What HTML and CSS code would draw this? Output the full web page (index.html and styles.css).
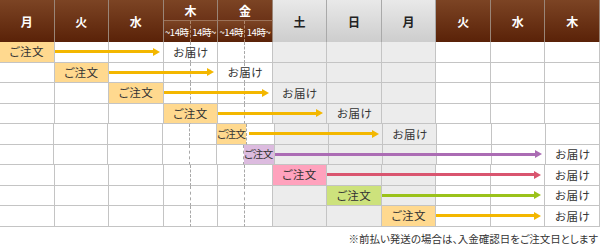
FILE: index.html
```html
<!DOCTYPE html>
<html lang="ja">
<head>
<meta charset="utf-8">
<title>お届けスケジュール</title>
<link rel="stylesheet" href="styles.css">
</head>
<body>
<div class="schedule">
  <div class="head">
    <div class="hd brown tall">月</div>
    <div class="hd brown tall">火</div>
    <div class="hd brown tall">水</div>
    <div class="hd brown top">木</div>
    <div class="hd brown top">金</div>
    <div class="hd gray tall">土</div>
    <div class="hd gray tall">日</div>
    <div class="hd gray tall">月</div>
    <div class="hd brown tall">火</div>
    <div class="hd brown tall">水</div>
    <div class="hd brown tall last">木</div>
    <div class="hd brown sub dash">~14時</div>
    <div class="hd brown sub">14時~</div>
    <div class="hd brown sub dash">~14時</div>
    <div class="hd brown sub">14時~</div>
  </div>

  <div class="row">
    <div class="cell mon"></div><div class="cell tue"></div><div class="cell wed"></div>
    <div class="cell thu-a"></div><div class="cell thu-b"></div><div class="cell fri-a"></div><div class="cell fri-b"></div>
    <div class="cell sat wk"></div><div class="cell sun wk"></div><div class="cell mon2 wk"></div>
    <div class="cell tue2"></div><div class="cell wed2"></div><div class="cell thu2"></div>
    <div class="order yellow-bg from-1 to-3">ご注文</div>
    <div class="arrow yellow from-3 to-7"></div>
    <div class="deliver from-7 to-9">お届け</div>
  </div>

  <div class="row">
    <div class="cell mon"></div><div class="cell tue"></div><div class="cell wed"></div>
    <div class="cell thu-a"></div><div class="cell thu-b"></div><div class="cell fri-a"></div><div class="cell fri-b"></div>
    <div class="cell sat wk"></div><div class="cell sun wk"></div><div class="cell mon2 wk"></div>
    <div class="cell tue2"></div><div class="cell wed2"></div><div class="cell thu2"></div>
    <div class="order yellow-bg from-3 to-5">ご注文</div>
    <div class="arrow yellow from-5 to-9"></div>
    <div class="deliver from-9 to-11">お届け</div>
  </div>

  <div class="row">
    <div class="cell mon"></div><div class="cell tue"></div><div class="cell wed"></div>
    <div class="cell thu-a"></div><div class="cell thu-b"></div><div class="cell fri-a"></div><div class="cell fri-b"></div>
    <div class="cell sat wk"></div><div class="cell sun wk"></div><div class="cell mon2 wk"></div>
    <div class="cell tue2"></div><div class="cell wed2"></div><div class="cell thu2"></div>
    <div class="order yellow-bg from-5 to-7">ご注文</div>
    <div class="arrow yellow from-7 to-11"></div>
    <div class="deliver from-11 to-13">お届け</div>
  </div>

  <div class="row">
    <div class="cell mon"></div><div class="cell tue"></div><div class="cell wed"></div>
    <div class="cell thu-a"></div><div class="cell thu-b"></div><div class="cell fri-a"></div><div class="cell fri-b"></div>
    <div class="cell sat wk"></div><div class="cell sun wk"></div><div class="cell mon2 wk"></div>
    <div class="cell tue2"></div><div class="cell wed2"></div><div class="cell thu2"></div>
    <div class="order yellow-bg from-7 to-9">ご注文</div>
    <div class="arrow yellow from-9 to-13"></div>
    <div class="deliver from-13 to-15">お届け</div>
  </div>

  <div class="row">
    <div class="cell mon"></div><div class="cell tue"></div><div class="cell wed"></div>
    <div class="cell thu-a"></div><div class="cell thu-b"></div><div class="cell fri-a"></div><div class="cell fri-b"></div>
    <div class="cell sat wk"></div><div class="cell sun wk"></div><div class="cell mon2 wk"></div>
    <div class="cell tue2"></div><div class="cell wed2"></div><div class="cell thu2"></div>
    <div class="order yellow-bg narrow from-9 to-10">ご注文</div>
    <div class="arrow yellow gap from-10 to-15"></div>
    <div class="deliver from-15 to-17">お届け</div>
  </div>

  <div class="row">
    <div class="cell mon"></div><div class="cell tue"></div><div class="cell wed"></div>
    <div class="cell thu-a"></div><div class="cell thu-b"></div><div class="cell fri-a"></div><div class="cell fri-b"></div>
    <div class="cell sat wk"></div><div class="cell sun wk"></div><div class="cell mon2 wk"></div>
    <div class="cell tue2"></div><div class="cell wed2"></div><div class="cell thu2"></div>
    <div class="order purple-bg narrow from-10 to-11">ご注文</div>
    <div class="arrow purple from-11 to-21"></div>
    <div class="deliver from-21 to-23">お届け</div>
  </div>

  <div class="row">
    <div class="cell mon"></div><div class="cell tue"></div><div class="cell wed"></div>
    <div class="cell thu-a"></div><div class="cell thu-b"></div><div class="cell fri-a"></div><div class="cell fri-b"></div>
    <div class="cell sat wk"></div><div class="cell sun wk"></div><div class="cell mon2 wk"></div>
    <div class="cell tue2"></div><div class="cell wed2"></div><div class="cell thu2"></div>
    <div class="order pink-bg from-11 to-13">ご注文</div>
    <div class="arrow pink from-13 to-21"></div>
    <div class="deliver from-21 to-23">お届け</div>
  </div>

  <div class="row">
    <div class="cell mon"></div><div class="cell tue"></div><div class="cell wed"></div>
    <div class="cell thu-a"></div><div class="cell thu-b"></div><div class="cell fri-a"></div><div class="cell fri-b"></div>
    <div class="cell sat wk"></div><div class="cell sun wk"></div><div class="cell mon2 wk"></div>
    <div class="cell tue2"></div><div class="cell wed2"></div><div class="cell thu2"></div>
    <div class="order green-bg from-13 to-15">ご注文</div>
    <div class="arrow green from-15 to-21"></div>
    <div class="deliver from-21 to-23">お届け</div>
  </div>

  <div class="row">
    <div class="cell mon"></div><div class="cell tue"></div><div class="cell wed"></div>
    <div class="cell thu-a"></div><div class="cell thu-b"></div><div class="cell fri-a"></div><div class="cell fri-b"></div>
    <div class="cell sat wk"></div><div class="cell sun wk"></div><div class="cell mon2 wk"></div>
    <div class="cell tue2"></div><div class="cell wed2"></div><div class="cell thu2"></div>
    <div class="order yellow-bg from-15 to-17">ご注文</div>
    <div class="arrow yellow from-17 to-21"></div>
    <div class="deliver from-21 to-23">お届け</div>
  </div>

  <p class="note">※前払い発送の場合は、入金確認日をご注文日とします</p>
</div>
</body>
</html>
```

FILE: styles.css
```css
* { box-sizing: border-box; }

html, body {
  margin: 0;
  padding: 0;
  background: #ffffff;
}

body {
  font-family: "Noto Sans CJK JP", "Noto Sans", sans-serif;
  color: #333333;
}

.schedule {
  width: 600px;
}

/* ---------- header ---------- */
.head {
  display: grid;
  grid-template-columns: repeat(22, 1fr);
  grid-template-rows: 21px 21px;
  height: 42px;
}

.hd {
  display: flex;
  align-items: center;
  justify-content: center;
  font-size: 12px;
  font-weight: bold;
  border-right: 1px solid #9a8577;
}

.hd.tall {
  grid-column: span 2;
  grid-row: span 2;
}

.hd.top {
  grid-column: span 2;
  border-bottom: 1px solid #9c7258;
  padding-top: 1px;
}

.hd.sub {
  font-size: 9.5px;
  font-weight: normal;
  color: #ecdacb;
  letter-spacing: -0.4px;
  white-space: nowrap;
  background: linear-gradient(#6a3014, #5a2207);
}

.hd.sub.dash {
  border-right: 1px dashed #b08a70;
}

.hd.brown {
  color: #ffffff;
  background-color: #652d12;
  background-image: linear-gradient(#7c4424, #5a2208);
}

.hd.top.brown {
  background-image: linear-gradient(#7c4424, #6c3318);
}

.hd.gray {
  color: #222222;
  background-image: linear-gradient(#e9e9e9, #cdcdcd);
  border-right: 1px solid #a9a9a9;
}

/* ---------- body rows ---------- */
.row {
  display: grid;
  grid-template-columns: repeat(22, 1fr);
  height: 20.5px;
}

.row > * {
  grid-row: 1;
}

.cell {
  border-right: 1px solid #c4c4c4;
  border-bottom: 1px solid #c4c4c4;
  background: #ffffff;
}

.cell.wk { background: #ececec; }

.mon   { grid-column: 1 / 3; }
.tue   { grid-column: 3 / 5; }
.wed   { grid-column: 5 / 7; }
.thu-a { grid-column: 7 / 8; border-right: 1px dashed #a8a8a8; }
.thu-b { grid-column: 8 / 9; }
.fri-a { grid-column: 9 / 10; border-right: 1px dashed #a8a8a8; }
.fri-b { grid-column: 10 / 11; }
.sat   { grid-column: 11 / 13; }
.sun   { grid-column: 13 / 15; }
.mon2  { grid-column: 15 / 17; }
.tue2  { grid-column: 17 / 19; }
.wed2  { grid-column: 19 / 21; }
.thu2  { grid-column: 21 / 23; }

.from-1  { grid-column-start: 1; }
.from-3  { grid-column-start: 3; }
.from-5  { grid-column-start: 5; }
.from-7  { grid-column-start: 7; }
.from-9  { grid-column-start: 9; }
.from-10 { grid-column-start: 10; }
.from-11 { grid-column-start: 11; }
.from-13 { grid-column-start: 13; }
.from-15 { grid-column-start: 15; }
.from-17 { grid-column-start: 17; }
.from-21 { grid-column-start: 21; }

.to-3  { grid-column-end: 3; }
.to-5  { grid-column-end: 5; }
.to-7  { grid-column-end: 7; }
.to-9  { grid-column-end: 9; }
.to-10 { grid-column-end: 10; }
.to-11 { grid-column-end: 11; }
.to-13 { grid-column-end: 13; }
.to-15 { grid-column-end: 15; }
.to-17 { grid-column-end: 17; }
.to-21 { grid-column-end: 21; }
.to-23 { grid-column-end: 23; }

.order {
  display: flex;
  align-items: center;
  justify-content: center;
  margin: 0 1px 1px 0;
  font-size: 11.5px;
  font-feature-settings: "palt";
  letter-spacing: 0.5px;
  color: #333333;
  white-space: nowrap;
  padding-bottom: 1px;
}

.order.narrow {
  font-size: 10.5px;
  letter-spacing: -0.6px;
  padding-right: 1px;
}

.yellow-bg { background: #ffd98f; }
.purple-bg { background: #dcbbdf; }
.pink-bg   { background: #ffa2bd; }
.green-bg  { background: #cde27c; }

.deliver {
  display: flex;
  align-items: center;
  justify-content: center;
  font-size: 11.5px;
  font-feature-settings: "palt";
  letter-spacing: 0.5px;
  color: #333333;
  white-space: nowrap;
  padding-bottom: 1px;
}

.arrow {
  display: flex;
  align-items: center;
  align-self: center;
  height: 9px;
  margin: 0 4px 1px 0;
}

.arrow.gap { margin-left: 2px; }

.arrow::before {
  content: "";
  flex: 1;
  height: 3px;
  background: currentColor;
}

.arrow::after {
  content: "";
  width: 0;
  height: 0;
  border-left: 7px solid currentColor;
  border-top: 4.5px solid transparent;
  border-bottom: 4.5px solid transparent;
}

.yellow { color: #f3b700; }
.purple { color: #ab6cb4; }
.pink   { color: #d9556f; }
.green  { color: #9bc21b; }

/* ---------- note ---------- */
.note {
  margin: 5px 2px 0 0;
  text-align: right;
  font-size: 10.5px;
  font-feature-settings: "palt";
  line-height: 14px;
  color: #333333;
}
```
